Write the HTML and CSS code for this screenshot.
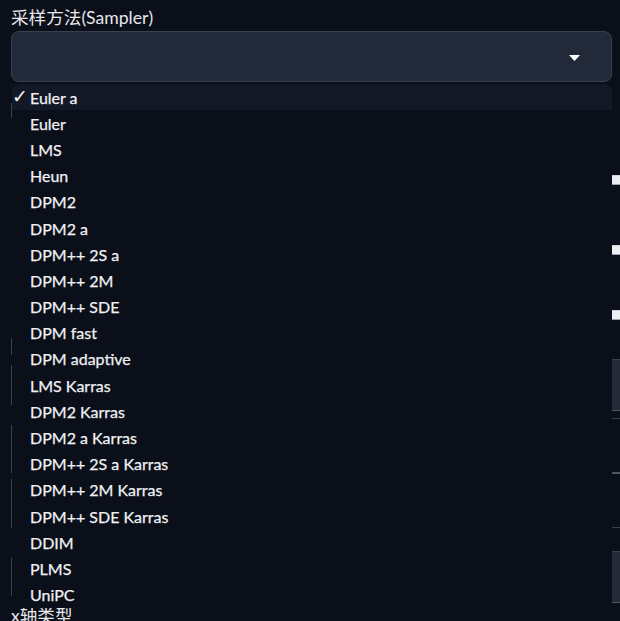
FILE: index.html
```html
<!DOCTYPE html>
<html lang="zh">
<head>
<meta charset="utf-8">
<title>Sampler</title>
<link rel="stylesheet" href="styles.css">
</head>
<body>
<div class="page">
  <div class="field-label">采样方法(Sampler)</div>
  <div class="dropdown">
    <div class="select-box">
      <svg class="arrow" width="11" height="6" viewBox="0 0 11 6"><path d="M0 0 H11 L5.5 6 Z" fill="#ffffff"/></svg>
    </div>
    <ul class="options">
      <li class="option selected"><span class="check">✓</span>Euler a</li>
      <li class="option"><span class="check"></span>Euler</li>
      <li class="option"><span class="check"></span>LMS</li>
      <li class="option"><span class="check"></span>Heun</li>
      <li class="option"><span class="check"></span>DPM2</li>
      <li class="option"><span class="check"></span>DPM2 a</li>
      <li class="option"><span class="check"></span>DPM++ 2S a</li>
      <li class="option"><span class="check"></span>DPM++ 2M</li>
      <li class="option"><span class="check"></span>DPM++ SDE</li>
      <li class="option"><span class="check"></span>DPM fast</li>
      <li class="option"><span class="check"></span>DPM adaptive</li>
      <li class="option"><span class="check"></span>LMS Karras</li>
      <li class="option"><span class="check"></span>DPM2 Karras</li>
      <li class="option"><span class="check"></span>DPM2 a Karras</li>
      <li class="option"><span class="check"></span>DPM++ 2S a Karras</li>
      <li class="option"><span class="check"></span>DPM++ 2M Karras</li>
      <li class="option"><span class="check"></span>DPM++ SDE Karras</li>
      <li class="option"><span class="check"></span>DDIM</li>
      <li class="option"><span class="check"></span>PLMS</li>
      <li class="option"><span class="check"></span>UniPC</li>
    </ul>
  </div>
  <div class="behind">
    <div class="col-left">
      <div class="edge e1"></div>
      <div class="edge e2"></div>
      <div class="edge e3"></div>
      <div class="edge e4"></div>
      <div class="edge e5"></div>
      <div class="edge e6"></div>
    </div>
    <div class="col-right">
      <div class="knob k1"></div>
      <div class="knob k2"></div>
      <div class="knob k3"></div>
      <div class="panel p1"></div>
      <div class="rule r1"></div>
      <div class="rule thick r2"></div>
      <div class="rule r3"></div>
      <div class="panel p2"></div>
    </div>
  </div>
  <div class="field-label axis">x轴类型</div>
</div>
</body>
</html>
```

FILE: styles.css
```css
html, body {
  margin: 0;
  padding: 0;
  background: #0b0f19;
  overflow: hidden;
}

.page {
  padding: 0 8px 0 11px;
  font-family: Lato, "Noto Sans CJK SC", sans-serif;
  color: #e5e7eb;
}

.field-label {
  padding-top: 7px;
  font-size: 17.6px;
  line-height: 22px;
  color: #e5e7eb;
  margin-bottom: 2px;
  white-space: nowrap;
}

.dropdown {
  position: relative;
  z-index: 5;
}

.select-box {
  height: 51px;
  box-sizing: border-box;
  background: #222938;
  border: 1px solid #374151;
  border-radius: 8px;
  display: flex;
  align-items: center;
  justify-content: flex-end;
  padding-right: 31px;
}

.arrow {
  display: block;
  margin-top: 3px;
}

.options {
  position: absolute;
  left: 1px;
  right: 0;
  top: calc(100% + 2px);
  margin: 0;
  padding: 0;
  list-style: none;
  background: #0b0f19;
  border-radius: 8px 8px 0 0;
  overflow: hidden;
}

.option {
  height: 26.2px;
  display: flex;
  align-items: center;
  font-size: 16px;
  color: #f0f1f3;
  white-space: nowrap;
  -webkit-text-stroke: 0.25px #f0f1f3;
}

.option.selected {
  background: #121826;
}

.check {
  display: inline-block;
  width: 18px;
  font-family: "DejaVu Sans", sans-serif;
  font-size: 19px;
  line-height: 1;
  color: #f3f4f6;
  margin-top: -2px;
  -webkit-text-stroke: 0;
}

.behind {
  display: flex;
  height: 523px;
  margin-right: -8px;
}

.col-left {
  width: 601px;
  flex: none;
}

.col-right {
  flex: 1;
  overflow: visible;
}

.edge {
  border-left: 1px solid #374151;
}
.e1 { margin-top: 21px; height: 15px; }
.e2 { margin-top: 220px; height: 17px; }
.e3 { margin-top: 10px; height: 40px; }
.e4 { margin-top: 20px; height: 48px; }
.e5 { margin-top: 6px; height: 49px; }
.e6 { margin-top: 30px; height: 38px; }

.knob {
  height: 10px;
  box-sizing: border-box;
  background: #eceef1;
  border-top: 1px solid #d1d5db;
  border-bottom: 1px solid #9ca3af;
}
.k1 { margin-top: 93px; }
.k2 { margin-top: 60px; }
.k3 { margin-top: 55px; }

.panel {
  height: 52px;
  box-sizing: border-box;
  background: #222938;
  border-top: 1px solid #374151;
  border-bottom: 1px solid #4b5563;
}
.p1 { margin-top: 39px; }
.p2 { margin-top: 23px; }

.rule {
  height: 1px;
  background: #374151;
}
.rule.thick {
  height: 2px;
  background: #4b5563;
}
.r1 { margin-top: 7px; }
.r2 { margin-top: 53px; }
.r3 { margin-top: 53px; }

.axis {
  padding-top: 0;
  margin-bottom: 0;
}
```
